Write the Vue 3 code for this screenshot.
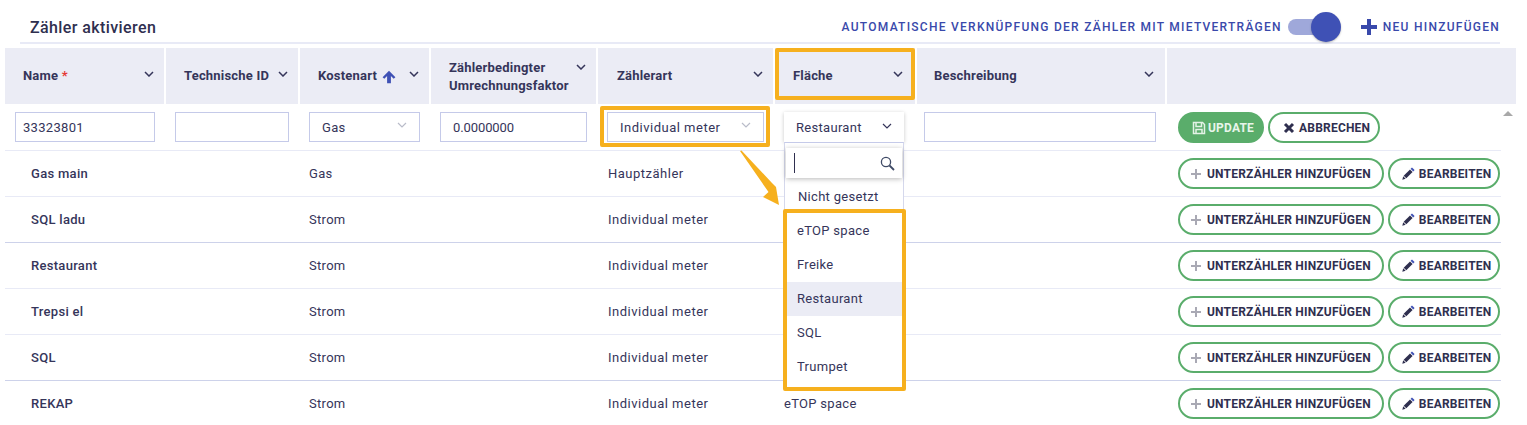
<script setup>
const rows = [
  { name: 'Gas main', cost: 'Gas', kind: 'Hauptzähler', area: '' },
  { name: 'SQL ladu', cost: 'Strom', kind: 'Individual meter', area: '', dark: true },
  { name: 'Restaurant', cost: 'Strom', kind: 'Individual meter', area: '' },
  { name: 'Trepsi el', cost: 'Strom', kind: 'Individual meter', area: '' },
  { name: 'SQL', cost: 'Strom', kind: 'Individual meter', area: '', dark: true },
  { name: 'REKAP', cost: 'Strom', kind: 'Individual meter', area: 'eTOP space' }
]
const options = ['eTOP space', 'Freike', 'Restaurant', 'SQL', 'Trumpet']
</script>

<template>
  <div class="page">
    <div class="topbar">
      <h1 class="title">Zähler aktivieren</h1>
      <div class="actions">
        <span class="link">AUTOMATISCHE VERKNÜPFUNG DER ZÄHLER MIT MIETVERTRÄGEN</span>
        <span class="toggle"><span class="track"></span><span class="knob"></span></span>
        <span class="link add">
          <svg width="16" height="16" viewBox="0 0 16 16"><path d="M6 0h4v6h6v4h-6v6H6v-6H0V6h6z" fill="#3949ab" /></svg>
          NEU HINZUFÜGEN
        </span>
      </div>
    </div>

    <div class="grid head">
      <div class="hcell c1"><span>Name <i class="req">*</i></span><svg class="chev" viewBox="0 0 10 6"><path d="M1 1l4 4 4-4" /></svg></div>
      <div class="hcell c2"><span>Technische ID</span><svg class="chev" viewBox="0 0 10 6"><path d="M1 1l4 4 4-4" /></svg></div>
      <div class="hcell c3">
        <span class="sorted">Kostenart
          <svg class="up" viewBox="0 0 14 14"><path d="M7 .8l6.4 6.4-1.7 1.6-2.8-2.7V13.2H5.1V6.1L2.3 8.8.6 7.2z" fill="#3f51b5" /></svg>
        </span>
        <svg class="chev" viewBox="0 0 10 6"><path d="M1 1l4 4 4-4" /></svg>
      </div>
      <div class="hcell c4"><span class="two">Zählerbedingter<br />Umrechnungsfaktor</span><svg class="chev high" viewBox="0 0 10 6"><path d="M1 1l4 4 4-4" /></svg></div>
      <div class="hcell c5"><span>Zählerart</span><svg class="chev" viewBox="0 0 10 6"><path d="M1 1l4 4 4-4" /></svg></div>
      <div class="hcell c6"><span>Fläche</span><svg class="chev" viewBox="0 0 10 6"><path d="M1 1l4 4 4-4" /></svg><b class="mark mark-head"></b></div>
      <div class="hcell c7"><span>Beschreibung</span><svg class="chev" viewBox="0 0 10 6"><path d="M1 1l4 4 4-4" /></svg></div>
      <div class="hcell"></div>
    </div>

    <div class="grid edit row">
      <div class="ecell e1"><div class="field">33323801</div></div>
      <div class="ecell e2"><div class="field"></div></div>
      <div class="ecell e3"><div class="field sel">Gas<svg class="chev pale" viewBox="0 0 10 6"><path d="M1 1l4 4 4-4" /></svg></div></div>
      <div class="ecell e4"><div class="field num">0.0000000</div></div>
      <div class="ecell e5">
        <div class="field sel wide">Individual meter<svg class="chev pale" viewBox="0 0 10 6"><path d="M1 1l4 4 4-4" /></svg></div>
        <b class="mark mark-kind"></b>
      </div>
      <div class="ecell e6">
        <div class="open sel">Restaurant<svg class="chev thin" viewBox="0 0 10 6"><path d="M1 1l4 4 4-4" /></svg></div>
        <div class="menu">
          <div class="search">
            <span class="cursor"></span>
            <svg width="15" height="15" viewBox="0 0 15 15"><circle cx="6" cy="6" r="4.6" fill="none" stroke="#3f4a66" stroke-width="1.3" /><path d="M9.5 9.5l4.5 4.5" stroke="#3f4a66" stroke-width="1.8" /></svg>
          </div>
          <div class="opt none">Nicht gesetzt</div>
          <div class="list">
            <div v-for="o in options" :key="o" class="opt" :class="{ active: o === 'Restaurant' }">{{ o }}</div>
          </div>
        </div>
      </div>
      <div class="ecell e7"><div class="field"></div></div>
      <div class="ecell btns">
        <button class="btn solid">
          <svg width="14" height="14" viewBox="0 0 14 14" fill="none" stroke="#e3f2e6" stroke-width="1.5"><path d="M1.5 1.5h9l2 2v9h-11z" /><path d="M4 1.5v4h5.5v-4M4 12.5V8.5h6v4" /></svg>
          UPDATE
        </button>
        <button class="btn cancel">
          <svg width="12" height="12" viewBox="0 0 12 12"><path d="M2 2l8 8M10 2l-8 8" stroke="#2f2f4f" stroke-width="3" /></svg>
          ABBRECHEN
        </button>
      </div>
    </div>

    <div v-for="r in rows" :key="r.name" class="grid row" :class="{ dark: r.dark }">
      <div class="dcell name">{{ r.name }}</div>
      <div class="dcell"></div>
      <div class="dcell cost">{{ r.cost }}</div>
      <div class="dcell"></div>
      <div class="dcell kind">{{ r.kind }}</div>
      <div class="dcell area">{{ r.area }}</div>
      <div class="dcell"></div>
      <div class="dcell btns">
        <button class="btn sub">
          <svg width="12" height="12" viewBox="0 0 12 12"><path d="M6 1v10M1 6h10" stroke="#a9a9b4" stroke-width="2" /></svg>
          UNTERZÄHLER HINZUFÜGEN
        </button>
        <button class="btn edit-btn">
          <svg width="13" height="13" viewBox="0 0 13 13"><path d="M10 .4l2.6 2.6-1.4 1.4-2.6-2.6z" fill="#3f51b5" /><path d="M8 2.4l2.6 2.6-6.3 6.3-2.6-2.6z" fill="#2f2f4f" /><path d="M1.2 9.3l2.5 2.5-3.4.9z" fill="#2f2f4f" /></svg>
          BEARBEITEN
        </button>
      </div>
    </div>

    <span class="scroll-up"></span>
    <svg class="pointer" width="40" height="56" viewBox="0 0 40 56"><path d="M0 1L1.5 .5 32 33l4 4 3 18-16-8 5.5-5z" fill="#f6b01e" /></svg>
  </div>
</template>

<style scoped>
.page {
  position: relative;
  width: 1527px;
  height: 425px;
  overflow: hidden;
  background: #fff;
  font-family: Roboto, "Noto Sans", sans-serif;
  font-size: 13px;
  letter-spacing: 0.3px;
  color: #35355a;
}
.topbar {
  display: flex;
  justify-content: space-between;
  align-items: center;
  box-sizing: border-box;
  height: 44px;
  margin: 0 27px 4px 20px;
  padding: 12px 0 0 10px;
  border-bottom: 2px solid #e8eaf6;
}
.title {
  margin: 0;
  font-size: 16px;
  font-weight: 500;
  letter-spacing: 0.4px;
  color: #2f2f4f;
}
.actions {
  display: flex;
  align-items: center;
  height: 30px;
}
.link {
  color: #3949ab;
  font-size: 12px;
  font-weight: 500;
  letter-spacing: 1.26px;
}
.add {
  display: flex;
  align-items: center;
  gap: 6px;
  margin-left: 20px;
}
.toggle {
  position: relative;
  display: block;
  width: 53px;
  height: 30px;
  margin-left: 6px;
}
.track {
  position: absolute;
  left: 0;
  top: 7px;
  width: 34px;
  height: 16px;
  border-radius: 8px;
  background: #9fa8da;
}
.knob {
  position: absolute;
  left: 23px;
  top: 0;
  width: 30px;
  height: 30px;
  border-radius: 50%;
  background: #3f51b5;
  box-shadow: 0 1px 2px rgba(0, 0, 0, 0.25);
}
.grid {
  display: grid;
  grid-template-columns: 159px 132px 129px 165px 175px 140px 248px 1fr;
  column-gap: 2px;
  margin-left: 5px;
}
.head {
  width: 1511px;
  height: 56px;
}
.hcell {
  position: relative;
  display: flex;
  align-items: center;
  justify-content: space-between;
  box-sizing: border-box;
  padding-bottom: 1px;
  background: #ebecf5;
  font-weight: 700;
  letter-spacing: 0.2px;
  line-height: 18px;
  color: #35355a;
}
.c1 { padding-left: 18px; padding-right: 10px; }
.c2 { padding-left: 18px; padding-right: 10px; }
.c3 { padding-left: 18px; padding-right: 10px; }
.c4 { padding-left: 18px; padding-right: 10px; }
.c5 { padding-left: 19px; padding-right: 10px; }
.c6 { padding-left: 18px; padding-right: 12px; }
.c7 { padding-left: 17px; padding-right: 11px; }
.two {
  margin-top: 2px;
}
.req {
  color: #e53935;
  font-style: normal;
}
.sorted {
  display: flex;
  align-items: center;
  gap: 5px;
}
.up {
  width: 14px;
  height: 14px;
  margin-top: 2px;
}
.chev {
  flex: none;
  width: 10px;
  height: 6px;
  margin-top: -3px;
  fill: none;
  stroke: #35355a;
  stroke-width: 1.5;
}
.chev.high {
  align-self: flex-start;
  margin-top: 16px;
}
.chev.pale {
  stroke: #b9bcc9;
  stroke-width: 1.2;
  margin-top: -4px;
}
.chev.thin {
  stroke-width: 1.2;
}
.row {
  box-sizing: border-box;
  width: 1496px;
  height: 46px;
  border-bottom: 1px solid #e8eaf6;
}
.row.edit {
  height: 47px;
}
.ecell {
  position: relative;
  display: flex;
  align-items: flex-start;
  padding-top: 8px;
}
.row.dark {
  border-bottom-color: #cdd2ea;
}
.e1 { padding-left: 10px; }
.e2 { padding-left: 9px; }
.e3 { padding-left: 9px; }
.e4 { padding-left: 9px; }
.e5 { padding-left: 9px; }
.e6 { padding-left: 9px; }
.e7 { padding-left: 7px; }
.field {
  box-sizing: border-box;
  display: flex;
  align-items: center;
  height: 30px;
  padding-left: 7px;
  border: 1px solid #c5cae9;
  background: #fff;
}
.e1 .field { width: 140px; }
.e2 .field { width: 114px; }
.e3 .field { width: 111px; }
.e4 .field { width: 147px; }
.e5 .field { width: 157px; }
.e7 .field { width: 232px; }
.sel {
  justify-content: space-between;
  padding-left: 12px;
  padding-right: 12px;
}
.wide {
  letter-spacing: 0.5px;
}
.num {
  padding-left: 12px;
  letter-spacing: -0.1px;
}
.open {
  box-sizing: border-box;
  display: flex;
  align-items: center;
  width: 120px;
  height: 30px;
  background: #fff;
  box-shadow: 0 1px 4px rgba(0, 0, 0, 0.22);
}
.mark {
  position: absolute;
  box-sizing: border-box;
  border: 4px solid #f6b01e;
  border-radius: 2px;
  pointer-events: none;
}
.mark-head {
  left: 0;
  right: 0;
  top: 0;
  bottom: 4px;
}
.mark-kind {
  left: 2px;
  top: 2px;
  width: 170px;
  height: 41px;
}
.menu {
  position: absolute;
  z-index: 2;
  left: 9px;
  top: 38px;
  box-sizing: border-box;
  width: 120px;
  height: 243px;
  padding: 5px 1px 0;
  border: 1px solid #d5d8ec;
  border-top-color: #c5cae9;
  background: #fff;
}
.search {
  display: flex;
  align-items: center;
  justify-content: space-between;
  height: 30px;
  padding: 0 7px 0 8px;
  background: #fff;
  box-shadow: 0 1px 5px rgba(0, 0, 0, 0.28);
}
.cursor {
  width: 1px;
  height: 20px;
  background: #2f2f4f;
}
.opt {
  height: 34px;
  line-height: 34px;
  padding-left: 12px;
}
.none {
  margin-top: 2px;
}
.list {
  position: relative;
  margin: -5px -4px 0 -3px;
  padding: 1px 0 3px;
  border: 4px solid #f6b01e;
  border-radius: 2px;
  background: #fff;
}
.list .opt {
  padding-left: 10px;
}
.active {
  background: #ebecf5;
}
.dcell {
  display: flex;
  align-items: center;
  height: 45px;
}
.name {
  padding-left: 26px;
  font-weight: 500;
}
.cost { padding-left: 9px; }
.kind { padding-left: 10px; letter-spacing: 0.5px; }
.area { padding-left: 9px; }
.btns {
  display: flex;
  gap: 4px;
  padding-left: 11px;
}
.btn {
  display: flex;
  align-items: center;
  box-sizing: border-box;
  height: 31px;
  border: 2px solid #5aad6b;
  border-radius: 16px;
  background: #fff;
  color: #2f2f4f;
  font-family: inherit;
  font-size: 12px;
  font-weight: 700;
  letter-spacing: 0.2px;
  white-space: nowrap;
}
.btn.solid {
  gap: 2px;
  padding: 0 8px 0 12px;
  background: #5aad6b;
  color: #e8f5ea;
}
.cancel {
  gap: 4px;
  padding: 0 8px 0 13px;
}
.sub {
  gap: 5px;
  padding: 0 11px 0 10px;
}
.edit-btn {
  gap: 4px;
  padding: 0 7px 0 12px;
}
.scroll-up {
  position: absolute;
  left: 1503px;
  top: 111px;
  border-left: 5px solid transparent;
  border-right: 5px solid transparent;
  border-bottom: 5px solid #a8a8a8;
}
.pointer {
  position: absolute;
  left: 740px;
  top: 150px;
  z-index: 1;
}
</style>

<style>
html, body { margin: 0; overflow: hidden; background: #fff; }
</style>
